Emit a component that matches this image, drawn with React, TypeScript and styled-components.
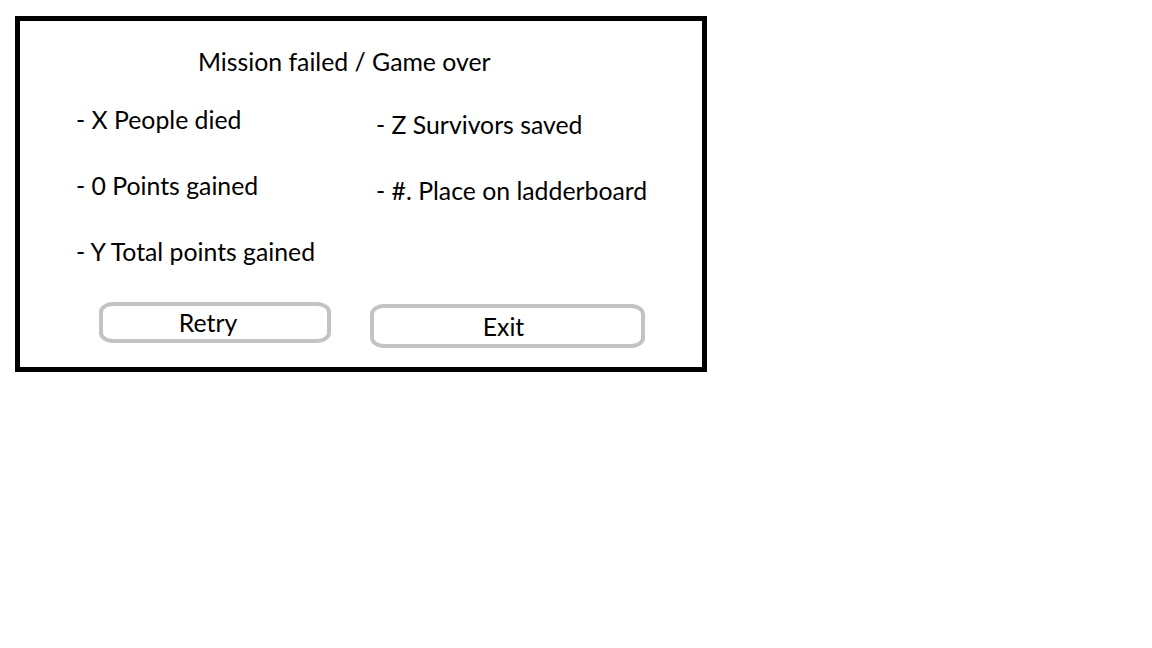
import styled, { createGlobalStyle } from "styled-components";

const GlobalStyle = createGlobalStyle`
  body {
    margin: 0;
    background: #ffffff;
    font-family: Lato, "Open Sans", sans-serif;
    color: #000000;
  }
`;

const leftStats = ["- X People died", "- 0 Points gained", "- Y Total points gained"];
const rightStats = ["- Z Survivors saved", "- #. Place on ladderboard"];

export default function App() {
  return (
    <>
      <GlobalStyle />
      <Panel>
        <Title>Mission failed / Game over</Title>
        <Stats>
          <Column>
            {leftStats.map((s) => (
              <Stat key={s}>{s}</Stat>
            ))}
          </Column>
          <Column $offset={5}>
            {rightStats.map((s) => (
              <Stat key={s}>{s}</Stat>
            ))}
          </Column>
        </Stats>
        <Actions>
          <ActionButton $width={232} $height={41} $gap={79} $shift={14}>Retry</ActionButton>
          <ActionButton $width={275} $height={44} $gap={39} $top={2} $shift={8}>Exit</ActionButton>
        </Actions>
      </Panel>
    </>
  );
}

const Panel = styled.div`
  margin: 16px 0 0 15px;
  width: 692px;
  height: 356px;
  box-sizing: border-box;
  border: 5px solid #000000;
  padding-top: 26px;
  display: flex;
  flex-direction: column;
`;

const Title = styled.div`
  padding-left: 178px;
  font-size: 24.8px;
  line-height: 30px;
`;

const Stats = styled.div`
  display: grid;
  grid-template-columns: 300px auto;
  padding-left: 56px;
  margin-top: 28px;
`;

const Column = styled.div<{ $offset?: number }>`
  display: flex;
  flex-direction: column;
  gap: 36px;
  margin-top: ${(p) => p.$offset ?? 0}px;
`;

const Stat = styled.div`
  font-size: 24.8px;
  line-height: 30px;
  white-space: nowrap;
`;

const Actions = styled.div`
  display: flex;
  align-items: flex-start;
  margin-top: 35px;
`;

const ActionButton = styled.div<{
  $width: number;
  $height: number;
  $gap: number;
  $top?: number;
  $shift?: number;
}>`
  width: ${(p) => p.$width}px;
  height: ${(p) => p.$height}px;
  margin-left: ${(p) => p.$gap}px;
  margin-top: ${(p) => p.$top ?? 0}px;
  padding-right: ${(p) => p.$shift ?? 0}px;
  box-sizing: border-box;
  border: 4px solid #c3c3c3;
  border-radius: 14px / 10px;
  display: flex;
  align-items: center;
  justify-content: center;
  font-size: 24.8px;
  cursor: pointer;
`;
